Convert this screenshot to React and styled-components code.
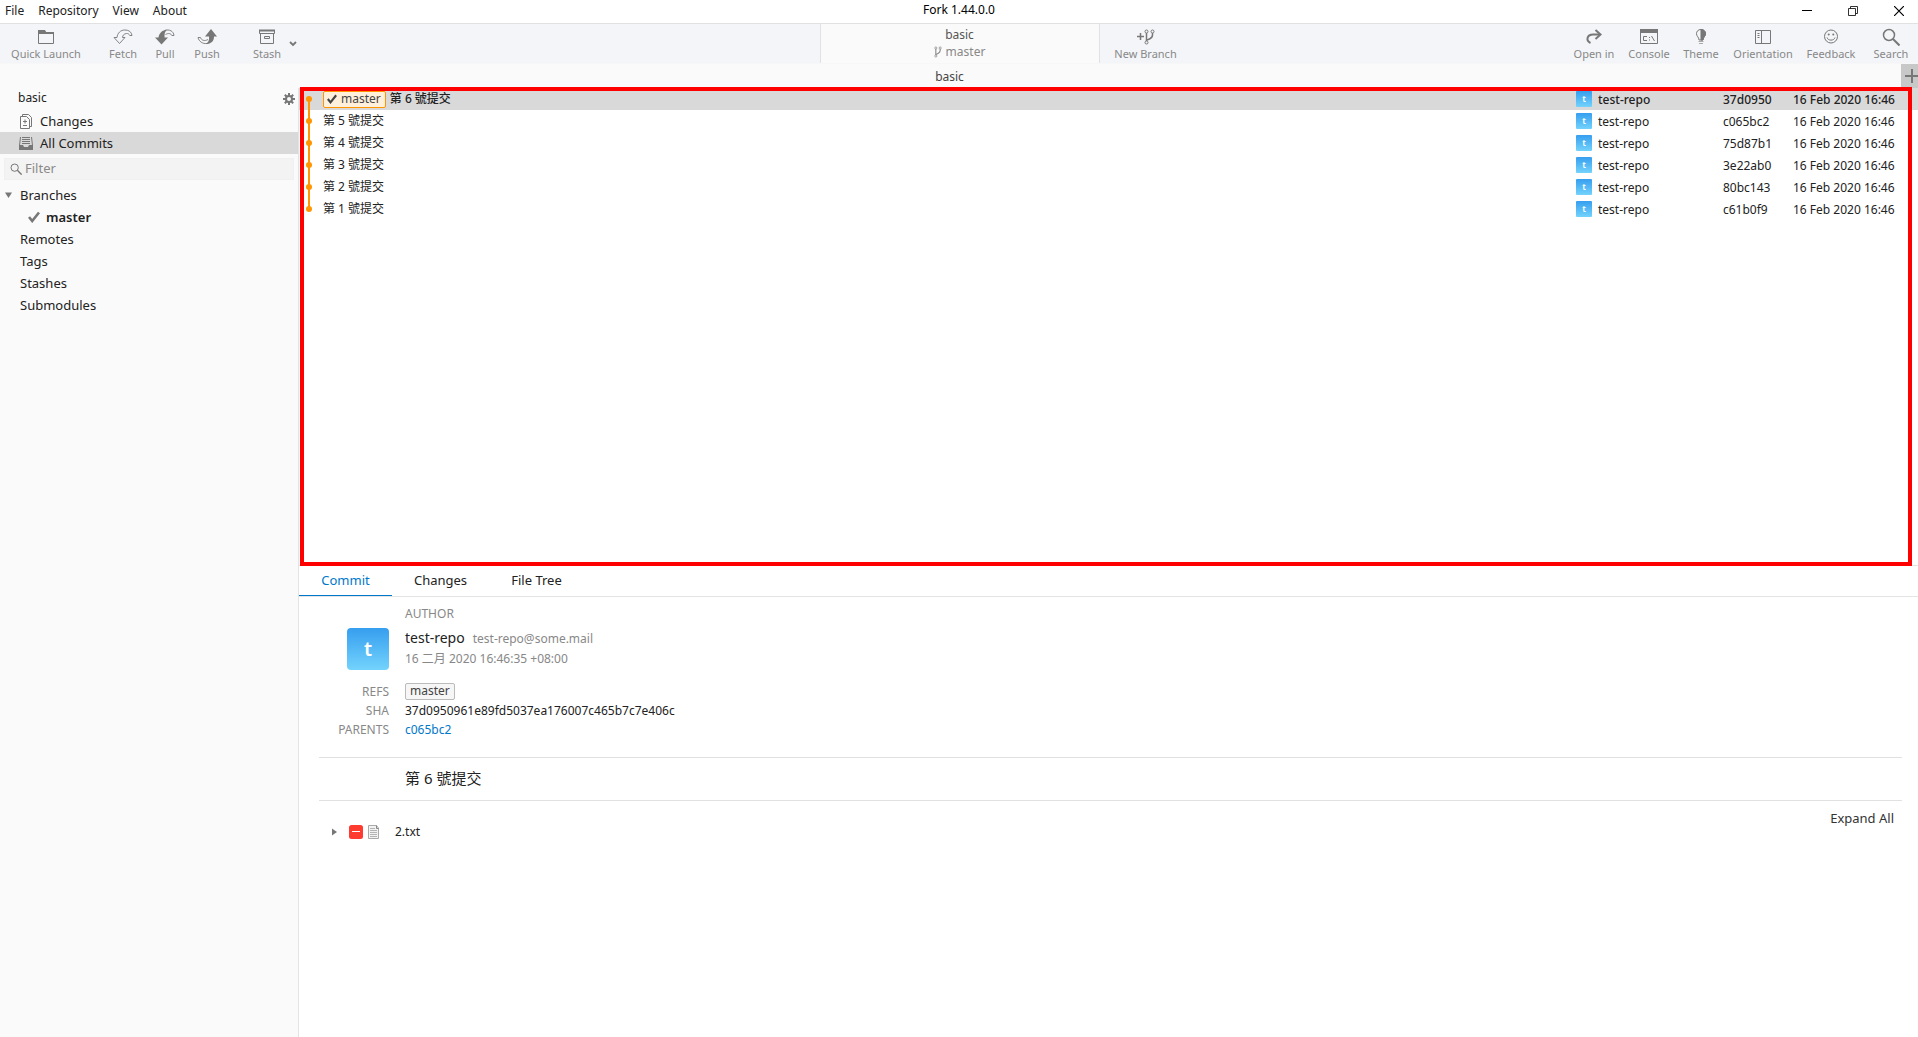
import React from "react";
import styled, { createGlobalStyle, css } from "styled-components";

const GlobalStyle = createGlobalStyle`
  *, *::before, *::after { box-sizing: border-box; }
  html, body, #root { height: 100%; }
  body {
    margin: 0;
    background: #fff;
    color: #222;
    font-family: "Noto Sans", "Noto Sans CJK TC", sans-serif;
    font-size: 12px;
    line-height: 16px;
    overflow: hidden;
  }
  button, input { font: inherit; color: inherit; }
  svg { display: block; flex: none; }
`;

const plainButton = css`
  border: 0;
  padding: 0;
  background: none;
  cursor: pointer;
`;

const Window = styled.div`
  height: 100%;
  display: flex;
  flex-direction: column;
`;

const TitleBar = styled.header`
  flex: none;
  display: grid;
  grid-template-columns: 1fr auto 1fr;
  height: 24px;
  border-bottom: 1px solid #e1e1e1;
`;

const MenuBar = styled.nav`
  display: flex;
  gap: 14px;
  padding: 3px 0 0 5px;
`;

const MenuButton = styled.button`
  ${plainButton}
  height: 16px;
`;

const WindowTitle = styled.h1`
  margin: 0;
  padding-top: 2px;
  font-size: 12px;
  font-weight: 400;
  color: #000;
`;

const WindowButtons = styled.div`
  display: flex;
  justify-content: flex-end;
  gap: 8px;
`;

const WindowButton = styled.button`
  ${plainButton}
  width: 38px;
  height: 21px;
  display: grid;
  place-items: center;
  color: #000;
`;

const Toolbar = styled.div`
  flex: none;
  display: grid;
  grid-template-columns: 1fr 280px 1fr;
  height: 40px;
  padding-left: 1px;
  background: #f4f5f8;
  border-bottom: 1px solid #f7f7f8;
  color: #777;
`;

const ToolGroup = styled.div`
  display: flex;
`;

const ToolButton = styled.button`
  ${plainButton}
  width: ${(p) => p.$width}px;
  margin-left: ${(p) => p.$space || 0}px;
  display: flex;
  flex-direction: column;
  align-items: center;
  padding-top: 4px;
  font-size: 11px;
  line-height: 16px;
  color: #888;
  white-space: nowrap;
  svg { color: #777; }
`;

const RightTools = styled.div`
  flex: 1;
  display: flex;
  justify-content: flex-end;
`;

const StashMenuButton = styled.button`
  ${plainButton}
  width: 10px;
  display: grid;
  place-items: center;
  color: #777;
`;

const RepoStatus = styled.div`
  padding-top: 2px;
  background: #fafafa;
  border: solid #e1e1e1;
  border-width: 0 1px;
  text-align: center;
  color: #555;
  line-height: 17px;
`;

const CurrentBranch = styled.div`
  display: flex;
  justify-content: center;
  align-items: center;
  gap: 4px;
  color: #888;
`;

const TabStrip = styled.div`
  flex: none;
  display: flex;
  height: 24px;
  background: #fafafa;
`;

const RepoTab = styled.button`
  ${plainButton}
  flex: 1;
  padding: 2px 2px 0 0;
  color: #444;
`;

const AddTab = styled.button`
  ${plainButton}
  width: 17px;
  overflow: hidden;
  background: #c8c8c8;
  padding-left: 4px;
  color: #777;
`;

const Body = styled.div`
  flex: 1;
  min-height: 0;
  display: flex;
`;

const Sidebar = styled.aside`
  flex: none;
  width: 299px;
  background: #fafafa;
  border-right: 1px solid #e4e4e4;
  font-size: 13px;
`;

const SidebarHeader = styled.div`
  display: flex;
  justify-content: space-between;
  align-items: center;
  height: 22px;
  padding: 0 3px 0 18px;
  font-size: 12px;
`;

const RepoName = styled.span`
  padding-bottom: 2px;
`;

const IconButton = styled.button`
  ${plainButton}
  color: #777;
`;

const SidebarItem = styled.button`
  ${plainButton}
  display: flex;
  align-items: center;
  width: 100%;
  height: 22px;
  padding-left: ${(p) => p.$indent}px;
  gap: ${(p) => p.$gap || 0}px;
  background: ${(p) => (p.$selected ? "#d9d9d9" : "transparent")};
  font-weight: ${(p) => (p.$current ? 600 : 400)};
  svg { color: #777; }
`;

const FilterBox = styled.label`
  display: flex;
  align-items: center;
  gap: 3px;
  height: 22px;
  margin: 4px;
  padding-left: 5px;
  background: #f3f3f3;
  border: 1px solid #f0f0f0;
  color: #777;
`;

const FilterInput = styled.input`
  flex: 1;
  min-width: 0;
  height: 20px;
  border: 0;
  padding: 0 0 2px;
  outline: 0;
  background: none;
  &::placeholder { color: #8a8a8a; opacity: 1; }
`;

const Main = styled.main`
  flex: 1;
  min-width: 0;
  display: grid;
  grid-template-rows: minmax(0, 478fr) minmax(0, 471fr);
`;

const CommitPane = styled.section`
  position: relative;
  border-bottom: 1px solid #e4e4e4;
`;

const Highlight = styled.div`
  position: absolute;
  inset: -1px 6px -1px 1px;
  border: 4px solid #f00;
  pointer-events: none;
`;

const CommitTable = styled.table`
  width: 100%;
  table-layout: fixed;
  border-collapse: collapse;
`;

const Column = styled.col`
  width: ${(p) => (p.$width ? `${p.$width}px` : "auto")};
`;

const CommitRow = styled.tr`
  height: 22px;
  background: ${(p) => (p.$selected ? "#d9d9d9" : "#fff")};
  font-weight: ${(p) => (p.$selected ? 500 : 400)};
`;

const Cell = styled.td`
  height: 22px;
  padding: 0;
  white-space: nowrap;
`;

const MetaCell = styled(Cell)`
  padding-top: 2px;
`;

const CellContent = styled.div`
  display: flex;
  align-items: center;
  gap: ${(p) => p.$gap || 0}px;
`;

const CommitAuthor = styled.span`
  padding-top: 2px;
`;

const HeadBadge = styled.span`
  display: inline-flex;
  align-items: center;
  gap: 4px;
  height: 17px;
  padding: 0 4px 0 3px;
  border: 1px solid #ff9500;
  border-radius: 2px;
  background: #fff0dc;
  color: #444;
  font-weight: 400;
  line-height: 14px;
`;

const Avatar = styled.span`
  flex: none;
  display: grid;
  place-items: center;
  width: ${(p) => p.$size}px;
  height: ${(p) => p.$size}px;
  border-radius: ${(p) => (p.$size > 20 ? 4 : 1)}px;
  background: linear-gradient(#369eef, #73d3fc);
  color: #fff;
  font-size: ${(p) => (p.$size > 20 ? 20 : 9)}px;
  font-weight: 600;
`;

const Details = styled.section`
  min-width: 0;
`;

const DetailTabs = styled.div`
  display: flex;
  height: 31px;
  border-bottom: 1px solid #e4e4e4;
  font-size: 13px;
`;

const DetailTab = styled.button`
  ${plainButton}
  width: ${(p) => p.$width}px;
  height: 30px;
  padding-bottom: 2px;
  border-bottom: 1px solid ${(p) => (p.$active ? "#0078ca" : "transparent")};
  color: ${(p) => (p.$active ? "#0078ca" : "#222")};
`;

const DetailBody = styled.div`
  padding: 7px 16px 0 20px;
`;

const InfoGrid = styled.div`
  display: grid;
  grid-template-columns: 70px 1fr;
  column-gap: 16px;
  grid-auto-rows: 19px;
  align-items: center;
  margin-top: ${(p) => p.$space || 0}px;
`;

const InfoLabel = styled.span`
  grid-column: ${(p) => p.$column || 1};
  text-align: ${(p) => (p.$column === 2 ? "left" : "right")};
  color: #888;
`;

const AuthorCard = styled.div`
  display: grid;
  grid-template-columns: 70px 1fr;
  column-gap: 16px;
  margin-top: 5px;
`;

const AvatarSlot = styled.div`
  display: flex;
  justify-content: flex-end;
`;

const AuthorLine = styled.div`
  display: flex;
  align-items: baseline;
  gap: 8px;
  line-height: 20px;
  color: #888;
`;

const AuthorName = styled.span`
  font-size: 14px;
  color: #222;
`;

const RefBadge = styled.span`
  justify-self: start;
  height: 17px;
  padding: 0 4px;
  border: 1px solid #bbb;
  border-radius: 2px;
  background: #f6f6f6;
  color: #444;
  line-height: 14px;
`;

const ParentLink = styled.a`
  justify-self: start;
  color: #0078ca;
  text-decoration: none;
`;

const Message = styled.p`
  margin: 18px 0 0;
  padding: 10px 0 12px 86px;
  border: solid #e1e1e1;
  border-width: 1px 0;
  font-size: 15px;
  line-height: 20px;
`;

const FileArea = styled.div`
  display: flex;
  justify-content: space-between;
  align-items: flex-start;
  padding: 9px 8px 0 12px;
`;

const FileRow = styled.button`
  ${plainButton}
  display: flex;
  align-items: center;
  height: 22px;
  margin-top: 11px;
`;

const FileIcons = styled.span`
  display: flex;
  align-items: center;
  gap: 5px;
  margin: 0 15px 0 12px;
`;

const ExpandAll = styled.button`
  ${plainButton}
  font-size: 13px;
  color: #333;
`;

/* Icons */

const Icon = ({ w = 16, h = 16, children }) => (
  <svg width={w} height={h} viewBox={`0 0 ${w} ${h}`} fill="none" stroke="currentColor" aria-hidden="true">
    {children}
  </svg>
);

const FolderIcon = () => (
  <Icon w={18} h={18}>
    <path d="M1.5 2.5h6l1 2h8v11h-15z" />
    <path d="M1 2h7l1 2h8v2h-16z" fill="currentColor" stroke="none" />
  </Icon>
);

const FetchIcon = () => (
  <Icon w={20} h={18}>
    <path d="M1 9.500h3C4.500 5 7.500 2 12 2c4 0 6.500 2 7 5.500h-2.200C16 6 15 5.300 13.500 5.500c-2.500.3-3.800 1.800-4 4H12L6.500 15.500z" strokeWidth=".9" />
  </Icon>
);

const PullIcon = () => (
  <Icon w={20} h={18}>
    <path d="M0 9.500h3.500C4 5 7.500 1.800 12 1.700 9.500 3.800 9.400 6.500 9.600 9.500H13L6.500 16.500z" fill="currentColor" stroke="none" />
    <path d="M9.500 2.500C14.500.8 18.600 3.300 19 7.500h-2.200C16 5.500 13.500 4.800 10.500 6.500" strokeWidth=".9" />
  </Icon>
);

const PushIcon = () => (
  <Icon w={20} h={18}>
    <path d="M14 1l6 7.500h-3c0 4.800-3 7.700-8.500 7.500 3.500-1.500 3.700-4.500 3.500-7.500H8z" fill="currentColor" stroke="none" />
    <path d="M1 9.500h2.500c.8 2.800 4 4 7.500 2M1 9.500c1 4 4.500 6.500 9 6" strokeWidth=".9" />
  </Icon>
);

const StashIcon = () => (
  <Icon w={18} h={18}>
    <path d="M1.500 2.500h15v3h-15zM2.500 5.500v10h13v-10M6.500 8.500h5v2h-5z" />
    <path d="M1 2.500h16" strokeWidth="2" />
  </Icon>
);

const ChevronIcon = () => (
  <Icon w={8} h={6}>
    <path d="M1 1l3 3 3-3" strokeWidth="1.800" />
  </Icon>
);

const BranchShape = () => (
  <>
    <circle cx="2.500" cy="2.500" r="1.500" />
    <circle cx="8.500" cy="2.500" r="1.500" />
    <circle cx="2.500" cy="13.500" r="1.500" />
    <path d="M2.500 4v8M8.500 4v2c0 2-1 3-3 4s-3 1-3 2" strokeWidth="1.500" />
  </>
);

const NewBranchIcon = () => (
  <Icon w={20} h={18}>
    <path d="M1 8.500h7M4.500 5v7" strokeWidth="1.500" />
    <g transform="translate(8 1)"><BranchShape /></g>
  </Icon>
);

const SmallBranchIcon = () => (
  <svg width="8" height="12" viewBox="0 0 11 16" fill="none" stroke="currentColor" aria-hidden="true">
    <BranchShape />
  </svg>
);

const OpenInIcon = () => (
  <Icon w={18} h={18}>
    <path d="M5.500 15C.5 12.500 2 6.500 8 6.500h6" strokeWidth="2" />
    <path d="M10.500 2l5 4.500-5 4.500" strokeWidth="2" />
  </Icon>
);

const ConsoleIcon = () => (
  <Icon w={20} h={18}>
    <path d="M1.500 2.500h17v13h-17z" />
    <path d="M1 1h18v4H1z" fill="currentColor" stroke="none" />
    <path d="M8 8.500H4.500v4H8M10.500 9v1M10.500 11.500v1M12.500 8l3 5" />
  </Icon>
);

const ThemeIcon = () => (
  <Icon w={18} h={18}>
    <path d="M9 1.500c-3 0-4.500 2-4.500 4.200C4.500 8.500 7 9 7 12h4c0-3 2.500-3.500 2.500-6.300C13.500 3.500 12 1.500 9 1.500z" />
    <path d="M9 1.500V12h2c0-3 2.500-3.500 2.500-6.300C13.500 3.500 12 1.500 9 1.500z" fill="currentColor" />
    <path d="M6.500 13.500h5M7 15.500h4" stroke="#aaa" />
  </Icon>
);

const OrientationIcon = () => (
  <Icon w={18} h={18}>
    <path d="M1.500 2.500h15v13h-15zM7.500 2.500v13M3.500 5.500h2M3.500 7.500h2M3.500 9.500h2" />
  </Icon>
);

const FeedbackIcon = () => (
  <Icon w={18} h={18}>
    <circle cx="9" cy="8.500" r="6.500" />
    <circle cx="6.700" cy="6.500" r="1" fill="currentColor" stroke="none" />
    <circle cx="11.300" cy="6.500" r="1" fill="currentColor" stroke="none" />
    <path d="M5 9.500c1 3.500 7 3.500 8 0" />
  </Icon>
);

const SearchIcon = ({ size = 18 }) => (
  <svg width={size} height={size} viewBox="0 0 18 18" fill="none" stroke="currentColor" aria-hidden="true">
    <circle cx="7" cy="7" r="5.500" strokeWidth="1.500" />
    <path d="M11 11l6.500 6.500" strokeWidth="2" />
  </svg>
);

const GearIcon = () => (
  <Icon w={12} h={12}>
    <circle cx="6" cy="6" r="3" strokeWidth="2" />
    <path d="M6 0v3M6 9v3M0 6h3M9 6h3M1.800 1.800l2 2M8.200 8.200l2 2M1.800 10.200l2-2M8.200 3.800l2-2" strokeWidth="2" />
  </Icon>
);

const ChangesIcon = () => (
  <Icon w={14} h={16}>
    <path d="M3.500 3V1.500h6l3 3v9H11M1.500 3.500h6l3 3v9h-9z" />
    <path d="M4 8.500h4M6 6.500v4M4 12.500h4" />
  </Icon>
);

const InboxIcon = () => (
  <Icon w={14} h={16}>
    <path d="M3 2.500h8M3 4.500h8M3 6.500h8M3 8.500h8" />
    <path d="M0 10h4l1 2h4l1-2h4v5H0z" fill="currentColor" stroke="none" />
    <path d="M.5 10.500L1.500 2M13.500 10.500L12.500 2" />
  </Icon>
);

const CheckIcon = ({ w = 12 }) => (
  <svg width={w} height={w} viewBox="0 0 12 12" fill="none" stroke="currentColor" aria-hidden="true">
    <path d="M1 6l3.200 4L11 1.500" strokeWidth="2.600" />
  </svg>
);

const ArrowDown = () => (
  <Icon w={7} h={6}><path d="M0 .5h7L3.500 6z" fill="currentColor" stroke="none" /></Icon>
);

const ArrowRight = () => (
  <Icon w={6} h={8}><path d="M1 0.500v7L6 4z" fill="#777" stroke="none" /></Icon>
);

const RemovedIcon = () => (
  <Icon w={14} h={14}>
    <rect width="14" height="14" rx="2.500" fill="#ff3b30" stroke="none" />
    <path d="M3 6.500h8" stroke="#fff" />
  </Icon>
);

const FileIcon = () => (
  <Icon w={12} h={14}>
    <path d="M.5.5h8l2 2.500v10.500H.5z" fill="#f2f2f2" stroke="#aaa" />
    <path d="M8.500.5v3h2" stroke="#888" />
    <path d="M2 3.500h5M2 5.500h7M2 7.500h7M2 9.500h7M2 11.500h7" stroke="#b4b4b4" />
  </Icon>
);

const GraphNode = ({ first, last }) => (
  <svg width="24" height="22" viewBox="0 0 24 22" aria-hidden="true">
    <path d={`M10 ${first ? 11 : 0}V${last ? 11 : 22}`} stroke="#ff9500" strokeWidth="2" />
    <circle cx="10" cy="11" r="3" fill="#ff9500" />
  </svg>
);

const leftTools = [
  { label: "Quick Launch", icon: FolderIcon, width: 90 },
  { label: "Fetch", icon: FetchIcon, width: 42, space: 11 },
  { label: "Pull", icon: PullIcon, width: 42 },
  { label: "Push", icon: PushIcon, width: 42 },
  { label: "Stash", icon: StashIcon, width: 42, space: 18 },
];

const rightTools = [
  { label: "Open in", icon: OpenInIcon, width: 60 },
  { label: "Console", icon: ConsoleIcon, width: 50 },
  { label: "Theme", icon: ThemeIcon, width: 54 },
  { label: "Orientation", icon: OrientationIcon, width: 70 },
  { label: "Feedback", icon: FeedbackIcon, width: 66 },
  { label: "Search", icon: SearchIcon, width: 54 },
];

const commits = [
  { message: "第 6 號提交", sha: "37d0950", head: true },
  { message: "第 5 號提交", sha: "c065bc2" },
  { message: "第 4 號提交", sha: "75d87b1" },
  { message: "第 3 號提交", sha: "3e22ab0" },
  { message: "第 2 號提交", sha: "80bc143" },
  { message: "第 1 號提交", sha: "c61b0f9" },
];

const Tool = ({ label, icon: Glyph, width, space }) => (
  <ToolButton type="button" $width={width} $space={space}>
    <Glyph />
    {label}
  </ToolButton>
);

export default function App() {
  return (
    <Window>
      <GlobalStyle />
      <TitleBar>
        <MenuBar>
          {["File", "Repository", "View", "About"].map((item) => (
            <MenuButton type="button" key={item}>{item}</MenuButton>
          ))}
        </MenuBar>
        <WindowTitle>Fork 1.44.0.0</WindowTitle>
        <WindowButtons>
          <WindowButton type="button" aria-label="Minimize">
            <Icon w={10} h={10}><path d="M0 4.500h10" /></Icon>
          </WindowButton>
          <WindowButton type="button" aria-label="Restore">
            <Icon w={10} h={10}><path d="M.5 2.500h7v7h-7zM2.500 2.500v-2h7v7h-2" strokeWidth=".8" /></Icon>
          </WindowButton>
          <WindowButton type="button" aria-label="Close">
            <Icon w={10} h={10}><path d="M0 0l10 10M10 0L0 10" strokeWidth="1.200" /></Icon>
          </WindowButton>
        </WindowButtons>
      </TitleBar>

      <Toolbar>
        <ToolGroup>
          {leftTools.map((tool) => <Tool key={tool.label} {...tool} />)}
          <StashMenuButton type="button" aria-label="Stash options"><ChevronIcon /></StashMenuButton>
        </ToolGroup>
        <RepoStatus>
          basic
          <CurrentBranch><SmallBranchIcon />master</CurrentBranch>
        </RepoStatus>
        <ToolGroup>
          <Tool label="New Branch" icon={NewBranchIcon} width={92} />
          <RightTools>
            {rightTools.map((tool) => <Tool key={tool.label} {...tool} />)}
          </RightTools>
        </ToolGroup>
      </Toolbar>

      <TabStrip>
        <RepoTab type="button">basic</RepoTab>
        <AddTab type="button" aria-label="New tab">
          <Icon w={14} h={24}><path d="M0 12h14M7 5v14" strokeWidth="2" /></Icon>
        </AddTab>
      </TabStrip>

      <Body>
        <Sidebar>
          <SidebarHeader>
            <RepoName>basic</RepoName>
            <IconButton type="button" aria-label="Repository settings"><GearIcon /></IconButton>
          </SidebarHeader>
          <SidebarItem type="button" $indent={19} $gap={7}><ChangesIcon />Changes</SidebarItem>
          <SidebarItem type="button" $indent={19} $gap={7} $selected><InboxIcon />All Commits</SidebarItem>
          <FilterBox>
            <SearchIcon size={12} />
            <FilterInput type="text" placeholder="Filter" aria-label="Filter" />
          </FilterBox>
          <SidebarItem type="button" $indent={5} $gap={8}><ArrowDown />Branches</SidebarItem>
          <SidebarItem type="button" $indent={28} $gap={6} $current><CheckIcon />master</SidebarItem>
          {["Remotes", "Tags", "Stashes", "Submodules"].map((item) => (
            <SidebarItem type="button" $indent={20} key={item}>{item}</SidebarItem>
          ))}
        </Sidebar>

        <Main>
          <CommitPane>
            <CommitTable>
              <colgroup>
                <Column $width={24} />
                <Column />
                <Column $width={147} />
                <Column $width={70} />
                <Column $width={125} />
              </colgroup>
              <tbody>
                {commits.map((commit, i) => (
                  <CommitRow key={commit.sha} $selected={commit.head}>
                    <Cell><GraphNode first={i === 0} last={i === commits.length - 1} /></Cell>
                    <Cell>
                      <CellContent $gap={4}>
                        {commit.head && <HeadBadge><CheckIcon w={10} />master</HeadBadge>}
                        {commit.message}
                      </CellContent>
                    </Cell>
                    <Cell>
                      <CellContent $gap={6}>
                        <Avatar $size={16}>t</Avatar>
                        <CommitAuthor>test-repo</CommitAuthor>
                      </CellContent>
                    </Cell>
                    <MetaCell>{commit.sha}</MetaCell>
                    <MetaCell>16 Feb 2020 16:46</MetaCell>
                  </CommitRow>
                ))}
              </tbody>
            </CommitTable>
            <Highlight />
          </CommitPane>

          <Details>
            <DetailTabs>
              <DetailTab type="button" $width={93} $active>Commit</DetailTab>
              <DetailTab type="button" $width={97}>Changes</DetailTab>
              <DetailTab type="button" $width={95}>File Tree</DetailTab>
            </DetailTabs>
            <DetailBody>
              <InfoGrid><InfoLabel $column={2}>AUTHOR</InfoLabel></InfoGrid>
              <AuthorCard>
                <AvatarSlot><Avatar $size={42}>t</Avatar></AvatarSlot>
                <div>
                  <AuthorLine><AuthorName>test-repo</AuthorName>test-repo@some.mail</AuthorLine>
                  <AuthorLine>16 二月 2020 16:46:35 +08:00</AuthorLine>
                </div>
              </AuthorCard>
              <InfoGrid $space={12}>
                <InfoLabel>REFS</InfoLabel>
                <RefBadge>master</RefBadge>
                <InfoLabel>SHA</InfoLabel>
                <span>37d0950961e89fd5037ea176007c465b7c7e406c</span>
                <InfoLabel>PARENTS</InfoLabel>
                <ParentLink href="#c065bc2">c065bc2</ParentLink>
              </InfoGrid>
              <Message>第 6 號提交</Message>
              <FileArea>
                <FileRow type="button">
                  <ArrowRight />
                  <FileIcons><RemovedIcon /><FileIcon /></FileIcons>
                  2.txt
                </FileRow>
                <ExpandAll type="button">Expand All</ExpandAll>
              </FileArea>
            </DetailBody>
          </Details>
        </Main>
      </Body>
    </Window>
  );
}
